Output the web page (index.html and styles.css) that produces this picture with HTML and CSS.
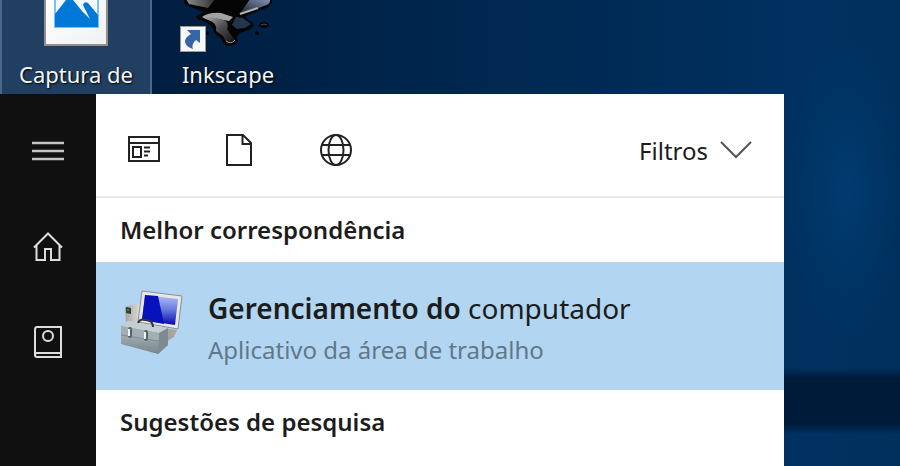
FILE: index.html
```html
<!DOCTYPE html>
<html lang="pt-BR">
<head>
<meta charset="utf-8">
<title>Pesquisa</title>
<link rel="stylesheet" href="styles.css">
</head>
<body>
<div class="desktop">
  <a class="shortcut shortcut-selected" href="#">
    <svg class="shortcut-icon" viewBox="0 0 96 58" aria-hidden="true">
      <defs>
        <linearGradient id="paper" x1="0" y1="0" x2="1" y2="1"><stop offset="0" stop-color="#fff"/><stop offset="1" stop-color="#f0f1f4"/></linearGradient>
      </defs>
      <path d="M16 -4H80V46H16Z" fill="#8f908e"/>
      <path d="M18 -4H78V44H18Z" fill="url(#paper)"/>
      <path d="M26 -4H71V28H26Z" fill="#7cc0f4"/>
      <path d="M28 -4H69V26H28Z" fill="#f4faff"/>
      <path d="M27 14 38 0H45L54 11 62 19 55 5Q56 1 60 3L70 15V27H27Z" fill="#0078d7"/>
    </svg>
    <span class="shortcut-label">Captura de</span>
  </a>
  <a class="shortcut" href="#">
    <svg class="shortcut-icon" viewBox="0 0 96 58" aria-hidden="true">
      <defs>
        <linearGradient id="inkLeft" x1="0" y1="0" x2="1" y2="0"><stop offset="0" stop-color="#8a8a8a"/><stop offset="1" stop-color="#333"/></linearGradient>
        <linearGradient id="inkRight" x1="0" y1="1" x2="1" y2="0"><stop offset="0" stop-color="#1a1c22"/><stop offset="1" stop-color="#8295bd"/></linearGradient>
        <linearGradient id="inkDrip" x1="0" y1="0" x2="1" y2="1"><stop offset="0" stop-color="#b4b4b4"/><stop offset=".5" stop-color="#4c4d50"/><stop offset="1" stop-color="#111"/></linearGradient>
      </defs>
      <path d="M4 -1H92Q93 5 86 8L65 16Q67 20 73 23 76 27 68 30L60 33Q55 36 58 41 55 46 47 46 42 44 42 39L34 33Q34 26 24 21 15 19 16 16L24 12 8 6Q3 4 4 -1Z" fill="#050506"/>
      <path d="M6 -1H35L28 8 9 4Z" fill="url(#inkLeft)"/>
      <path d="M70 -1H90Q91 4 84 6L66 13 59 14 64 8Z" fill="url(#inkRight)"/>
      <path d="M22 17Q29 12 41 13L53 17 49 21 32 18Z" fill="#a3a3a3"/>
      <path d="M22 17Q31 16 43 20 50 22 47 29L51 35 55 40Q51 44 46 42L43 36 36 31Q38 23 28 20Z" fill="url(#inkDrip)"/>
      <path d="M56 17 63 18 71 24 65 28 57 29 52 25Z" fill="#27354c"/>
      <path d="M60 14 78 8" stroke="#b0b0b0" stroke-width="2"/>
      <path d="M46 41Q51 45 55 40" stroke="#999" fill="none"/>
      <ellipse cx="84" cy="25" rx="5" ry="3" fill="#050506"/>
      <path d="M81 25Q84 23 87 25" stroke="#41516a" fill="none"/>
      <circle cx="77" cy="33" r="2" fill="#050506"/>
      <circle cx="27" cy="33" r="2" fill="#050506"/>
      <path d="M0 26H26V52H0Z" fill="#9b9a9a"/>
      <path d="M1 27H25V51H1Z" fill="#f7f8fa"/>
      <path d="M7 30H20V43L16 40Q11 44 13 49 6 47 5 42 5 37 11 34Z" fill="#3766a8"/>
    </svg>
    <span class="shortcut-label">Inkscape</span>
  </a>
</div>
<main class="search">
  <nav class="rail" aria-label="Menu">
    <button class="rail-button" type="button" aria-label="Expandir menu">
      <svg class="icon-large" viewBox="0 0 36 36" aria-hidden="true"><path d="M2 10H34M2 18H34M2 26H34" stroke="#c4c4c4" stroke-width="2.400"/></svg>
    </button>
    <button class="rail-button" type="button" aria-label="Início">
      <svg class="icon-large" viewBox="0 0 36 36" fill="none" stroke="#ddd" stroke-width="2" aria-hidden="true"><path d="M4 18.500 18 4.500 32 18.500M6.500 16.500V31H15V20H21V31H29.500V16.500"/></svg>
    </button>
    <button class="rail-button" type="button" aria-label="Caderno">
      <svg class="icon-large" viewBox="0 0 36 36" fill="none" stroke="#ddd" stroke-width="2" aria-hidden="true"><path d="M5 31V5Q5 2 7 2H31V32H7Q5 32 5 30Q5 28 7 28H31"/><circle cx="18" cy="11" r="5"/></svg>
    </button>
  </nav>
  <section class="results">
    <header class="toolbar">
      <button class="tool" type="button" aria-label="Aplicativos">
        <svg class="icon-large" viewBox="0 0 36 36" fill="none" stroke="#222" stroke-width="2" aria-hidden="true"><path d="M3 5H33V29H3ZM3 11H33M7 15H15V25H7ZM18 15.500H24M18 19.500H24M18 23.500H22"/></svg>
      </button>
      <button class="tool" type="button" aria-label="Documentos">
        <svg class="icon-large" viewBox="0 0 36 36" fill="none" stroke="#222" stroke-width="2" aria-hidden="true"><path d="M5 3H21L29 11V33H5ZM20.500 3V12H29"/></svg>
      </button>
      <button class="tool" type="button" aria-label="Web">
        <svg class="icon-large" viewBox="0 0 36 36" fill="none" stroke="#222" stroke-width="2" aria-hidden="true"><circle cx="18" cy="18" r="15"/><ellipse cx="18" cy="18" rx="7.500" ry="15"/><path d="M4 13H32M4 23H32"/></svg>
      </button>
      <button class="filters" type="button">Filtros
        <svg class="icon-large" viewBox="0 0 36 36" fill="none" stroke="#555" stroke-width="2" aria-hidden="true"><path d="M3 10 18 25 33 10"/></svg>
      </button>
    </header>
    <h2 class="heading">Melhor correspondência</h2>
    <a class="match" href="#">
      <svg class="match-icon" viewBox="0 0 64 68" aria-hidden="true">
        <defs>
          <linearGradient id="screen" x1="0" y1="0" x2="0" y2="1"><stop offset="0" stop-color="#b4c0f4"/><stop offset=".5" stop-color="#6478dc"/><stop offset="1" stop-color="#0708ae"/></linearGradient>
          <linearGradient id="box" x1="0" y1="0" x2="0" y2="1"><stop offset="0" stop-color="#bec9cd"/><stop offset="1" stop-color="#77868c"/></linearGradient>
          <linearGradient id="tower" x1="0" y1="0" x2="1" y2="0"><stop offset="0" stop-color="#a5a39e"/><stop offset="1" stop-color="#eeece8"/></linearGradient>
        </defs>
        <path d="M5 17 18 13 24 16V40L6 36Z" fill="url(#tower)"/>
        <path d="M6 17 11 18V24L6 23Z" fill="#333d37"/><path d="M7 20H9" stroke="#6dca58"/>
        <path d="M44 38 57 40 54 47 46 52Z" fill="#a7a4a0"/>
        <path d="M22 1 62 6 58 39 18 32Z" fill="#e7e7e8" stroke="#8b8e92"/>
        <path d="M25 5 58 9 55 35 22 30Z" fill="url(#screen)"/>
        <path d="M25 5 38 6 44 34 22 30Z" fill="#0712bc"/>
        <path d="M1 36 8 31 48 38V55L38 64 1 54Z" fill="url(#box)"/>
        <path d="M1 36 8 31 48 38 39 43Z" fill="#c4cfd3"/>
        <path d="M39 43 48 38V55L38 64Z" fill="#7d8b91"/>
        <path d="M1 36 39 43V51L1 44Z" fill="#a1afb5"/>
        <path d="M1 45 38 51 48 44" fill="none" stroke="#7f8e94"/>
        <path d="M18 33Q20 28 26 30L30 31Q33 33 33 37" fill="none" stroke="#303538" stroke-width="2"/>
        <path d="M10 39V46M26 42V49" stroke="#53646c" stroke-width="4" stroke-linecap="round"/><path d="M9 39V46M25 42V49" stroke="#f0f3f3" stroke-width="2"/>
      </svg>
      <span class="match-text">
        <span class="match-title"><strong>Gerenciamento do</strong> computador</span>
        <span class="match-kind">Aplicativo da área de trabalho</span>
      </span>
    </a>
    <h2 class="heading">Sugestões de pesquisa</h2>
  </section>
</main>
</body>
</html>
```
FILE: styles.css
```css
* {
  box-sizing: border-box;
}

body {
  margin: 0;
  min-height: 100vh;
  display: flex;
  flex-direction: column;
  font-family: "Noto Sans", "Open Sans", sans-serif;
  color: #1c1c1c;
  background:
    linear-gradient(transparent 368px, #001b3a 378px, #001b3a 424px, transparent 434px),
    radial-gradient(ellipse 60px 150px at 94% 190px, #003b70, transparent),
    linear-gradient(90deg, #001e40 17%, #00264e 50%, #003160 90%, #00305c);
}

button {
  border: 0;
  padding: 0;
  background: none;
  font: inherit;
  color: inherit;
}

a {
  color: inherit;
  text-decoration: none;
}

svg {
  display: block;
  flex: none;
}

.desktop {
  display: flex;
  height: 94px;
}

.shortcut {
  width: 152px;
  display: flex;
  flex-direction: column;
  align-items: center;
  border: solid transparent;
  border-width: 0 2px;
  color: #f2f5f8;
}

.shortcut-selected {
  background: #203f61;
  border-color: #47698b;
}

.shortcut-icon {
  width: 96px;
  height: 58px;
}

.shortcut-label {
  font-size: 22px;
  line-height: 32px;
  text-shadow: 1px 1px 2px #000;
}

.search {
  flex: 1;
  display: flex;
  margin-right: 116px;
}

.rail {
  width: 96px;
  flex: none;
  display: flex;
  flex-direction: column;
  padding-top: 9px;
  background: #101010;
}

.rail-button {
  height: 96px;
  display: grid;
  place-items: center;
}

.icon-large {
  width: 36px;
  height: 36px;
}

.results {
  flex: 1;
  background: #fff;
}

.toolbar {
  display: flex;
  height: 104px;
  padding-top: 10px;
  border-bottom: 2px solid #e8e8e8;
}

.tool {
  width: 96px;
  display: grid;
  place-items: center;
}

.filters {
  display: flex;
  align-items: center;
  gap: 10px;
  margin-left: auto;
  padding-right: 30px;
  font-size: 24px;
}

.heading {
  margin: 0;
  padding: 16px 24px;
  font-size: 24px;
  line-height: 32px;
  font-weight: 600;
}

.match {
  display: flex;
  align-items: center;
  gap: 24px;
  height: 128px;
  padding: 0 24px 4px;
  background: #b2d6f2;
}

.match-icon {
  width: 64px;
  height: 68px;
}

.match-text {
  display: flex;
  flex-direction: column;
  gap: 8px;
  padding-top: 8px;
}

.match-title {
  font-size: 28px;
  line-height: 36px;
}

.match-title strong {
  font-weight: 600;
}

.match-kind {
  font-size: 24px;
  line-height: 32px;
  color: #60788a;
}
```
